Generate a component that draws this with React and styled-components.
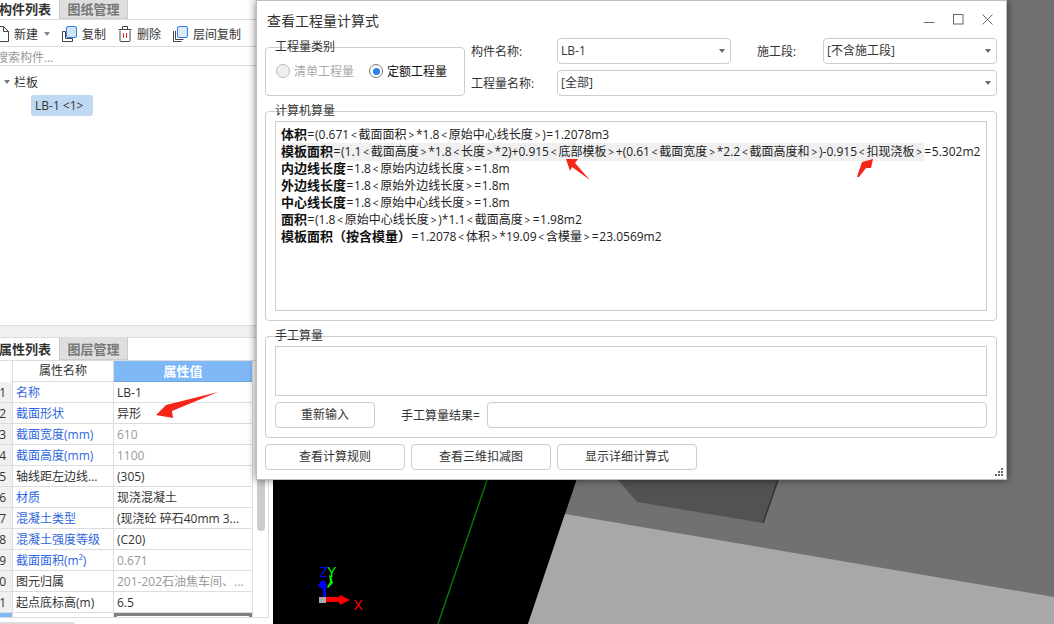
import React from 'react'
import styled, { createGlobalStyle } from 'styled-components'

const FONT = `"Open Sans", "Noto Sans CJK SC", sans-serif`

const GlobalStyle = createGlobalStyle`
  html, body { margin: 0; padding: 0; background: #fff; overflow: hidden; }
  body { font-family: ${FONT}; font-size: 12px; color: #333; }
  * { box-sizing: border-box; }
`

const Page = styled.div`
  position: relative;
  width: 1054px;
  height: 624px;
  display: grid;
  grid-template-columns: 273px 1fr;
  overflow: hidden;
`

/* ---------- left side ---------- */
const Side = styled.div`
  display: flex;
  flex-direction: column;
  height: 624px;
  width: 273px;
  background: #fff;
  overflow: hidden;
`
const UpperPanel = styled.div`
  height: 325px;
  flex: none;
`
const Divider = styled.div`
  height: 13px;
  flex: none;
  background: #f0f0f0;
  border-top: 1px solid #ddd;
  border-bottom: 1px solid #ddd;
`
const TabBar = styled.div`
  display: flex;
  border-bottom: 1px solid #ddd;
  height: ${p => p.$h}px;
`
const Tab = styled.div`
  font-size: 13px;
  font-weight: 700;
  line-height: ${p => p.$line}px;
  white-space: nowrap;
  ${p => p.$active
    ? `width: 60px; margin-left: -1px; color: #333; background: #fff;`
    : `width: 69px; text-align: center; color: #777; background: #dedede; border: 1px solid #ccc; border-top: none;`}
`
const Toolbar = styled.div`
  height: 27px;
  display: flex;
  align-items: center;
  gap: 12px;
  margin-left: -5px;
  padding-top: 1px;
  border-bottom: 1px solid #ddd;
`
const ToolItem = styled.div`
  display: flex;
  align-items: center;
  gap: 5px;
  white-space: nowrap;
`
const Caret = styled.i`
  display: block;
  width: 0;
  height: 0;
  border-left: 3px solid transparent;
  border-right: 3px solid transparent;
  border-top: 4px solid ${p => p.$color || '#888'};
  margin-left: ${p => p.$gap || 0}px;
`
const Search = styled.div`
  height: 19px;
  line-height: 21px;
  margin-left: -4px;
  color: #999;
  border-bottom: 1px solid #ddd;
`
const Tree = styled.div`
  padding: 6px 0 0 4px;
`
const TreeRow = styled.div`
  display: flex;
  align-items: center;
  gap: 4px;
  height: 20px;
`
const TreeCaret = styled.i`
  display: block;
  width: 0;
  height: 0;
  border-left: 3px solid transparent;
  border-right: 3px solid transparent;
  border-top: 4px solid #777;
`
const Chip = styled.div`
  display: inline-block;
  margin: 3px 0 0 27px;
  width: 62px;
  height: 21px;
  line-height: 21px;
  padding-left: 4px;
  background: #c0d9f2;
  border-radius: 3px;
  white-space: pre;
`
const LowerPanel = styled.div`
  height: 257px;
  flex: none;
  width: 269px;
  display: flex;
  border-right: 1px solid #ddd;
  border-bottom: 1px solid #ddd;
  overflow: hidden;
`
const Table = styled.div`
  width: 253px;
  flex: none;
  border-right: 1px solid #ddd;
`
const Row = styled.div`
  display: grid;
  grid-template-columns: 13px 101px 1fr;
  height: 21px;
  border-bottom: 1px solid #ddd;
`
const IndexCell = styled.div`
  background: ${p => (p.$selected ? '#7fb8f7' : p.$blank ? '#fff' : '#f0f0f0')};
  border-right: 1px solid #ddd;
  display: flex;
  justify-content: flex-end;
  padding-right: 6px;
  overflow: hidden;
  line-height: 22px;
  white-space: nowrap;
`
const NameCell = styled.div`
  padding-left: 3px;
  line-height: 22px;
  border-right: 1px solid #ddd;
  color: ${p => (p.$link ? '#2f66e0' : '#333')};
  white-space: nowrap;
  overflow: hidden;
`
const ValueCell = styled.div`
  padding-left: 3px;
  line-height: 22px;
  color: ${p => (p.$muted ? '#999' : '#333')};
  white-space: nowrap;
  overflow: hidden;
`
const HeadName = styled.div`
  text-align: center;
  line-height: 20px;
  border-right: 1px solid #ddd;
`
const HeadValue = styled.div`
  text-align: center;
  line-height: 20px;
  font-weight: 700;
  font-size: 13px;
  color: #fff;
  background: #7fb8f7;
  border-bottom: 1px solid #6ea6e0;
  height: 21px;
`
const ActiveCell = styled.div`
  height: 21px;
  border: 3px solid #808080;
  border-bottom: none;
`
const ScrollThumb = styled.div`
  width: 8px;
  height: 170px;
  margin-left: 4px;
  background: #ccc;
  border-radius: 0 0 4px 4px;
`
const BottomTab = styled.div`
  width: 76px;
  height: 10px;
  margin-top: 4px;
  margin-left: -1px;
  border: 1px solid #ddd;
  border-radius: 0 4px 0 0;
`

/* ---------- 3d view ---------- */
const Scene = styled.svg`
  display: block;
  width: 781px;
  height: 624px;
  background: #000;
`
const AxisLabel = styled.text`
  font-family: "Liberation Sans", sans-serif;
  font-size: 14px;
  fill: ${p => p.$color};
`

/* ---------- dialog ---------- */
const Dialog = styled.div`
  position: absolute;
  left: 256px;
  top: 0;
  width: 751px;
  height: 480px;
  background: #fff;
  border: 1px solid #bdbdbd;
  box-shadow: 0 0 8px rgba(0, 0, 0, 0.55);
  padding: 0 9px 0 8px;
`
const TitleBar = styled.div`
  height: 37px;
  display: flex;
  align-items: center;
  justify-content: space-between;
  padding: 0 4px 0 2px;
`
const Title = styled.div`
  font-size: 14px;
  color: #333;
`
const WindowButtons = styled.div`
  display: flex;
  align-items: center;
  gap: 18px;
`
const TopSection = styled.div`
  display: flex;
  gap: 6px;
  height: 58px;
`
const Group = styled.div`
  position: relative;
  border: 1px solid #ccc;
  border-radius: 4px;
  padding: 9px;
`
const TypeGroup = styled(Group)`
  width: 200px;
  height: 49px;
  margin-top: 9px;
  padding: 15px 10px 0;
  display: flex;
  align-items: flex-start;
  gap: 15px;
`
const GroupLegend = styled.div`
  position: absolute;
  left: 9px;
  top: -9px;
  line-height: 16px;
  color: #333;
`
const RadioOption = styled.div`
  display: flex;
  align-items: center;
  gap: 4px;
  height: 16px;
  color: ${p => (p.$disabled ? '#aaa' : '#111')};
  white-space: nowrap;
`
const RadioDot = styled.span`
  width: 14px;
  height: 14px;
  border-radius: 50%;
  border: 1px solid ${p => (p.$disabled ? '#bbb' : '#777')};
  background: ${p => (p.$disabled ? '#eee' : '#fff')};
  display: flex;
  align-items: center;
  justify-content: center;
  &::after {
    content: '';
    display: ${p => (p.$checked ? 'block' : 'none')};
    width: 7px;
    height: 7px;
    border-radius: 50%;
    background: #2b7fe6;
  }
`
const Fields = styled.div`
  flex: 1;
  display: flex;
  flex-direction: column;
  gap: 6px;
`
const FieldRow = styled.div`
  display: flex;
  align-items: center;
  height: 26px;
`
const FieldLabel = styled.div`
  width: ${p => p.$w}px;
  flex: none;
  white-space: nowrap;
  padding-left: ${p => p.$pad || 0}px;
`
const Select = styled.div`
  flex: ${p => (p.$w ? 'none' : '1')};
  width: ${p => (p.$w ? `${p.$w}px` : 'auto')};
  height: 26px;
  border: 1px solid #ccc;
  border-radius: 4px;
  padding: 0 5px 0 3px;
  display: flex;
  align-items: center;
  justify-content: space-between;
  line-height: 24px;
`
const ComputedGroup = styled(Group)`
  margin-top: 15px;
  height: 210px;
`
const FormulaBox = styled.div`
  height: 190px;
  border: 1px solid #ccc;
  padding: 4px 5px;
  color: #222;
  overflow: hidden;
`
const FormulaLine = styled.div`
  height: 17px;
  line-height: 17px;
  white-space: nowrap;
`
const FormulaName = styled.b`
  font-weight: 700;
  font-size: 13px;
  color: #111;
`
const Symbol = styled.span`
  display: inline-block;
  width: ${p => (p.$eq ? 8 : 9.4)}px;
  text-align: center;
  font-size: ${p => (p.$eq ? 12 : 10)}px;
`
const Highlight = styled.span`
  display: inline-block;
  background: #f0f0f0;
`
const ManualGroup = styled(Group)`
  margin-top: 15px;
  height: 102px;
`
const ManualBox = styled.div`
  height: 50px;
  border: 1px solid #ccc;
`
const ManualRow = styled.div`
  display: flex;
  align-items: center;
  margin-top: 6px;
  height: 26px;
`
const Button = styled.div`
  width: ${p => p.$w || 140}px;
  height: 26px;
  flex: none;
  line-height: 24px;
  text-align: center;
  border: 1px solid #ccc;
  border-radius: 4px;
  color: #333;
`
const ResultLabel = styled.div`
  width: 112px;
  flex: none;
  padding-left: 26px;
  white-space: nowrap;
`
const ResultInput = styled.div`
  flex: 1;
  height: 26px;
  border: 1px solid #ccc;
  border-radius: 4px;
`
const ButtonRow = styled.div`
  display: flex;
  gap: 6px;
  margin-top: 6px;
`
const Grip = styled.svg`
  position: absolute;
  right: 3px;
  bottom: 3px;
  width: 8px;
  height: 8px;
`
const Marker = styled.svg`
  position: absolute;
  left: 0;
  top: 0;
  width: 1054px;
  height: 624px;
  pointer-events: none;
`

const rows = [
  ['1', '名称', 'LB-1', true, false],
  ['2', '截面形状', '异形', true, false],
  ['3', '截面宽度(mm)', '610', true, true],
  ['4', '截面高度(mm)', '1100', true, true],
  ['5', '轴线距左边线...', '(305)', false, false],
  ['6', '材质', '现浇混凝土', true, false],
  ['7', '混凝土类型', '(现浇砼 碎石40mm 3...', true, false],
  ['8', '混凝土强度等级', '(C20)', true, false],
  ['9', '截面面积(m²)', '0.671', true, true],
  ['10', '图元归属', '201-202石油焦车间、...', false, true],
  ['11', '起点底标高(m)', '6.5', false, false],
]

const formulas = [
  ['内边线长度', '=1.8<原始内边线长度>=1.8m'],
  ['外边线长度', '=1.8<原始外边线长度>=1.8m'],
  ['中心线长度', '=1.8<原始中心线长度>=1.8m'],
  ['面积', '=(1.8<原始中心线长度>)*1.1<截面高度>=1.98m2'],
  ['模板面积（按含模量）', '=1.2078<体积>*19.09<含模量>=23.0569m2'],
]

// the brackets and equals signs sit in wider boxes than the font gives them
const spaced = text =>
  text.split(/([<>=])/).map((part, i) =>
    /^[<>=]$/.test(part) ? <Symbol key={i} $eq={part === '='}>{part}</Symbol> : part
  )

function Icons({ kind }) {
  if (kind === 'new') {
    return (
      <svg width="14" height="16" viewBox="0 0 14 16" fill="none" stroke="#444">
        <path d="M.5.5h8l5 5v10H.5z M8.5.5v5h5" />
      </svg>
    )
  }
  if (kind === 'copy') {
    return (
      <svg width="15" height="16" viewBox="0 0 15 16" fill="none">
        <path d="M.5 5.5h3v7h7v3H.5z" stroke="#444" />
        <rect x="4.5" y=".5" width="10" height="11" rx="1.5" fill="#cfe3fa" stroke="#2b7fe6" />
      </svg>
    )
  }
  if (kind === 'trash') {
    return (
      <svg width="14" height="16" viewBox="0 0 14 16" fill="none">
        <path d="M2 4.5v10a1 1 0 0 0 1 1h8a1 1 0 0 0 1-1v-10M.5 3.5h13M4.5 3V.5h5V3" stroke="#444" />
        <path d="M5.5 7v5M8.5 7v5" stroke="#e22" />
      </svg>
    )
  }
  return (
    <svg width="15" height="16" viewBox="0 0 15 16" fill="none">
      <path d="M.5 5v10.5h8M2.5 5v8.5h8" stroke="#444" />
      <rect x="4.5" y=".5" width="10" height="11" rx="1.5" fill="#dcebfb" stroke="#2b7fe6" />
    </svg>
  )
}

export default function App() {
  return (
    <Page>
      <GlobalStyle />
      <Side>
        <UpperPanel>
          <TabBar $h={20}>
            <Tab $active $line={18}>构件列表</Tab>
            <Tab $line={18}>图纸管理</Tab>
          </TabBar>
          <Toolbar>
            <ToolItem><Icons kind="new" />新建<Caret $gap={1} /></ToolItem>
            <ToolItem><Icons kind="copy" />复制</ToolItem>
            <ToolItem><Icons kind="trash" />删除</ToolItem>
            <ToolItem><Icons kind="layer" />层间复制</ToolItem>
          </Toolbar>
          <Search>搜索构件...</Search>
          <Tree>
            <TreeRow><TreeCaret />栏板</TreeRow>
            <Chip>LB-1 &lt;1&gt;</Chip>
          </Tree>
        </UpperPanel>
        <Divider />
        <TabBar $h={23}>
          <Tab $active $line={23}>属性列表</Tab>
          <Tab $line={23}>图层管理</Tab>
        </TabBar>
        <LowerPanel>
          <Table>
            <Row>
              <IndexCell $blank />
              <HeadName>属性名称</HeadName>
              <HeadValue>属性值</HeadValue>
            </Row>
            {rows.map(([n, name, value, link, muted]) => (
              <Row key={n}>
                <IndexCell>{n}</IndexCell>
                <NameCell $link={link}>{name}</NameCell>
                <ValueCell $muted={muted}>{value}</ValueCell>
              </Row>
            ))}
            <Row>
              <IndexCell $selected />
              <NameCell />
              <ActiveCell />
            </Row>
          </Table>
          <ScrollThumb />
        </LowerPanel>
        <BottomTab />
      </Side>

      <Scene viewBox="273 0 781 624">
        <line x1="500" y1="442" x2="438" y2="624" stroke="#0a7a0a" strokeWidth="1.4" />
        <polygon points="738,0 1054,0 1054,624 528,624" fill="#717171" />
        <polygon points="618,480 637,502 763,523 778,480" fill="#525252" />
        <line x1="763" y1="523" x2="778" y2="480" stroke="#333" strokeWidth="1.5" />
        <polygon points="565,514 1054,597 1054,624 528,624" fill="#a8a8a8" />
        {/* axis gizmo */}
        <rect x="319" y="597" width="7" height="6" fill="#aaa" />
        <path d="M326 597h13l1-2 10 5-10 5-1-3h-13z" fill="#f00" />
        <path d="M327 587l3-5-1-7 2 1 2 7-2 2-3 3z" fill="#0f0" />
        <path d="M323 597v-8l-5-3 3-5 3-1 3 5-1 3v9z" fill="#00f" />
        <path d="M323 597h3v-10h-3z" fill="#00f" />
        <AxisLabel x="319.500" y="577" $color="#00f">Z</AxisLabel>
        <AxisLabel x="327" y="577" $color="#0f0">Y</AxisLabel>
        <AxisLabel x="353.500" y="610" $color="#f00">X</AxisLabel>
      </Scene>

      <Dialog>
        <TitleBar>
          <Title>查看工程量计算式</Title>
          <WindowButtons>
            <svg width="11" height="11" viewBox="0 0 11 11" stroke="#666" fill="none"><path d="M0 8.500h10.500" /></svg>
            <svg width="11" height="11" viewBox="0 0 11 11" stroke="#666" fill="none"><rect x=".5" y=".5" width="9.500" height="9.500" /></svg>
            <svg width="11" height="11" viewBox="0 0 11 11" stroke="#666" fill="none"><path d="M.5.5l10 10M10.500.5l-10 10" /></svg>
          </WindowButtons>
        </TitleBar>

        <TopSection>
          <TypeGroup>
            <GroupLegend>工程量类别</GroupLegend>
            <RadioOption $disabled><RadioDot $disabled />清单工程量</RadioOption>
            <RadioOption><RadioDot $checked />定额工程量</RadioOption>
          </TypeGroup>
          <Fields>
            <FieldRow>
              <FieldLabel $w={86}>构件名称:</FieldLabel>
              <Select $w={174}>LB-1<Caret $color="#667" /></Select>
              <FieldLabel $w={92} $pad={26}>施工段:</FieldLabel>
              <Select>[不含施工段]<Caret $color="#667" /></Select>
            </FieldRow>
            <FieldRow>
              <FieldLabel $w={86}>工程量名称:</FieldLabel>
              <Select>[全部]<Caret $color="#667" /></Select>
            </FieldRow>
          </Fields>
        </TopSection>

        <ComputedGroup>
          <GroupLegend>计算机算量</GroupLegend>
          <FormulaBox>
            <FormulaLine><FormulaName>体积</FormulaName>{spaced('=(0.671<截面面积>*1.8<原始中心线长度>)=1.2078m3')}</FormulaLine>
            <FormulaLine>
              <Highlight>
                <FormulaName>模板面积</FormulaName>{spaced('=(1.1<截面高度>*1.8<长度>*2)+0.915<底部模板>+(0.61<截面宽度>*2.2<截面高度和>)-0.915<扣现浇板>')}
              </Highlight>
              {spaced('=5.302m2')}
            </FormulaLine>
            {formulas.map(([name, text]) => (
              <FormulaLine key={name}><FormulaName>{name}</FormulaName>{spaced(text)}</FormulaLine>
            ))}
          </FormulaBox>
        </ComputedGroup>

        <ManualGroup>
          <GroupLegend>手工算量</GroupLegend>
          <ManualBox />
          <ManualRow>
            <Button $w={100}>重新输入</Button>
            <ResultLabel>手工算量结果=</ResultLabel>
            <ResultInput />
          </ManualRow>
        </ManualGroup>

        <ButtonRow>
          <Button>查看计算规则</Button>
          <Button>查看三维扣减图</Button>
          <Button>显示详细计算式</Button>
        </ButtonRow>

        <Grip viewBox="0 0 8 8" fill="#666">
          <rect x="6" y="0" width="2" height="2" />
          <rect x="3" y="3" width="2" height="2" />
          <rect x="6" y="3" width="2" height="2" />
          <rect x="0" y="6" width="2" height="2" />
          <rect x="3" y="6" width="2" height="2" />
          <rect x="6" y="6" width="2" height="2" />
        </Grip>
      </Dialog>

      {/* red markers drawn on top of the screenshot */}
      <Marker viewBox="0 0 1054 624">
        <polygon points="156,415 166,405 218,392 172,411 173,418" fill="#f5251a" />
        <polygon points="566,159 578,159 575,163 590,180 572,167 570,171" fill="#f5251a" />
        <polygon points="873,159 871,168 866,168 859,177 857,177 860,168 862,162" fill="#f5251a" />
      </Marker>
    </Page>
  )
}
